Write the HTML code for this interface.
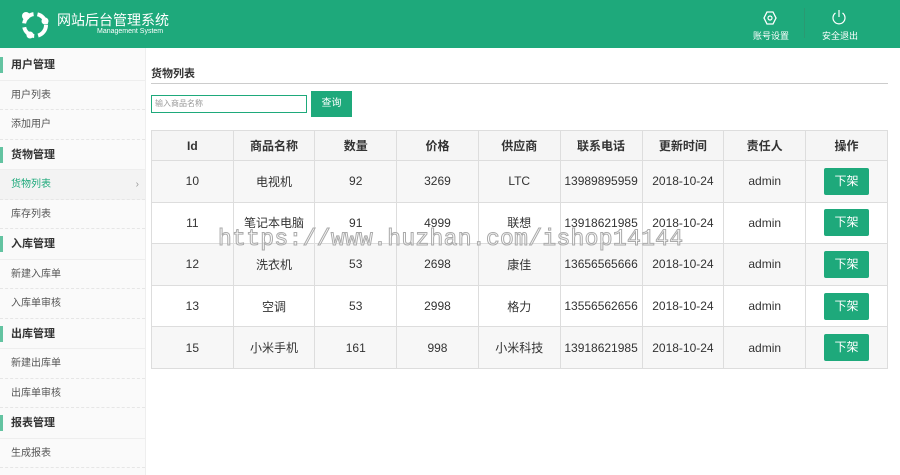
<!DOCTYPE html><html><head><meta charset="utf-8"><style>
*{margin:0;padding:0;box-sizing:border-box}
body{width:900px;height:475px;overflow:hidden;background:#fff;font-family:"Liberation Sans","Noto Sans CJK SC",sans-serif;position:relative;color:#333}
.hd{position:absolute;left:0;top:0;width:900px;height:48px;background:#1ea97b;color:#fff}
.side{position:absolute;left:0;top:48px;width:146px;height:427px;background:#fafafa;border-right:1px solid #eee}
.g{height:30.5px;line-height:30px;font-size:11px;font-weight:bold;padding-left:11px;position:relative;border-bottom:1px solid #eee}
.g:before{content:"";position:absolute;left:0;top:7px;width:3px;height:16px;background:#63c3a1}
.i{height:29.5px;line-height:29px;font-size:10px;padding-left:11px;color:#555;border-bottom:1px dashed #e6e6e6;position:relative}
.i.a{color:#1ea97b;background:#f3f3f3}
table{position:absolute;left:151px;top:130px;border-collapse:collapse;width:737px}
td,th{border:1px solid #ddd;text-align:center;font-size:12px;width:82px;color:#333}
th{height:30px;background:#f5f5f5;font-weight:bold}
td{height:41.6px}
tr.o td{background:#f7f7f7}
.b{display:inline-block;width:45px;height:27px;line-height:27px;background:#1ea97b;color:#fff;border-radius:2px;font-size:12px}
</style></head><body>
<div class="hd">
<svg style="position:absolute;left:20px;top:10px" width="30" height="30" viewBox="0 0 30 30"><circle cx="15" cy="15" r="11" fill="none" stroke="#fff" stroke-width="4" stroke-dasharray="14 4"/><circle cx="6" cy="6" r="4" fill="#fff"/><circle cx="25" cy="11" r="3.5" fill="#fff"/><circle cx="10" cy="25" r="3.5" fill="#fff"/></svg>
<div style="position:absolute;left:57px;top:10px;font-size:14px;white-space:nowrap">网站后台管理系统</div>
<div style="position:absolute;left:97px;top:28px;font-size:7px;white-space:nowrap">Management System</div>
<svg style="position:absolute;left:762px;top:10px" width="16" height="16" viewBox="0 0 16 16"><path d="M5 2h6l3 6-3 6H5L2 8z" fill="none" stroke="#fff" stroke-width="1.3"/><circle cx="8" cy="8" r="2" fill="none" stroke="#fff" stroke-width="1.2"/></svg>
<div style="position:absolute;left:753px;top:29px;font-size:9px">账号设置</div>
<div style="position:absolute;left:804px;top:8px;width:1px;height:30px;background:#2a9a72"></div>
<svg style="position:absolute;left:831px;top:9px" width="16" height="17" viewBox="0 0 16 17"><path d="M4.5 4A6 6 0 1 0 11.5 4" fill="none" stroke="#fff" stroke-width="1.2"/><path d="M8 1v7" stroke="#fff" stroke-width="1.2"/></svg>
<div style="position:absolute;left:822px;top:29px;font-size:9px">安全退出</div>
</div>
<div class="side">
<div class="g" style="margin-top:2px">用户管理</div><div class="i">用户列表</div><div class="i">添加用户</div>
<div class="g">货物管理</div><div class="i a">货物列表<span style="position:absolute;right:6px;color:#999">›</span></div><div class="i">库存列表</div>
<div class="g">入库管理</div><div class="i">新建入库单</div><div class="i">入库单审核</div>
<div class="g">出库管理</div><div class="i">新建出库单</div><div class="i">出库单审核</div>
<div class="g">报表管理</div><div class="i">生成报表</div>
</div>
<div style="position:absolute;left:151px;top:65px;font-size:11px;font-weight:bold">货物列表</div>
<div style="position:absolute;left:151px;top:83px;width:737px;height:1px;background:#ccc"></div>
<div style="position:absolute;left:151px;top:95px;width:156px;height:18px;border:1px solid #1ea97b;font-size:8px;color:#999;padding:3px 3px;line-height:10px">输入商品名称</div>
<div style="position:absolute;left:311px;top:91px;width:41px;height:26px;background:#1ea97b;color:#fff;font-size:10px;text-align:center;line-height:26px">查询</div>
<table>
<tr><th>Id</th><th>商品名称</th><th>数量</th><th>价格</th><th>供应商</th><th>联系电话</th><th>更新时间</th><th>责任人</th><th>操作</th></tr>
<tr class="o"><td>10</td><td>电视机</td><td>92</td><td>3269</td><td>LTC</td><td>13989895959</td><td>2018-10-24</td><td>admin</td><td><span class="b">下架</span></td></tr>
<tr><td>11</td><td>笔记本电脑</td><td>91</td><td>4999</td><td>联想</td><td>13918621985</td><td>2018-10-24</td><td>admin</td><td><span class="b">下架</span></td></tr>
<tr class="o"><td>12</td><td>洗衣机</td><td>53</td><td>2698</td><td>康佳</td><td>13656565666</td><td>2018-10-24</td><td>admin</td><td><span class="b">下架</span></td></tr>
<tr><td>13</td><td>空调</td><td>53</td><td>2998</td><td>格力</td><td>13556562656</td><td>2018-10-24</td><td>admin</td><td><span class="b">下架</span></td></tr>
<tr class="o"><td>15</td><td>小米手机</td><td>161</td><td>998</td><td>小米科技</td><td>13918621985</td><td>2018-10-24</td><td>admin</td><td><span class="b">下架</span></td></tr>
</table>
<div style="position:absolute;left:218px;top:226px;font-family:'Liberation Mono',monospace;font-size:23px;color:rgba(255,255,255,0.3);-webkit-text-stroke:1px #aaa;letter-spacing:0.3px">https://www.huzhan.com/ishop14144</div>
</body></html>
